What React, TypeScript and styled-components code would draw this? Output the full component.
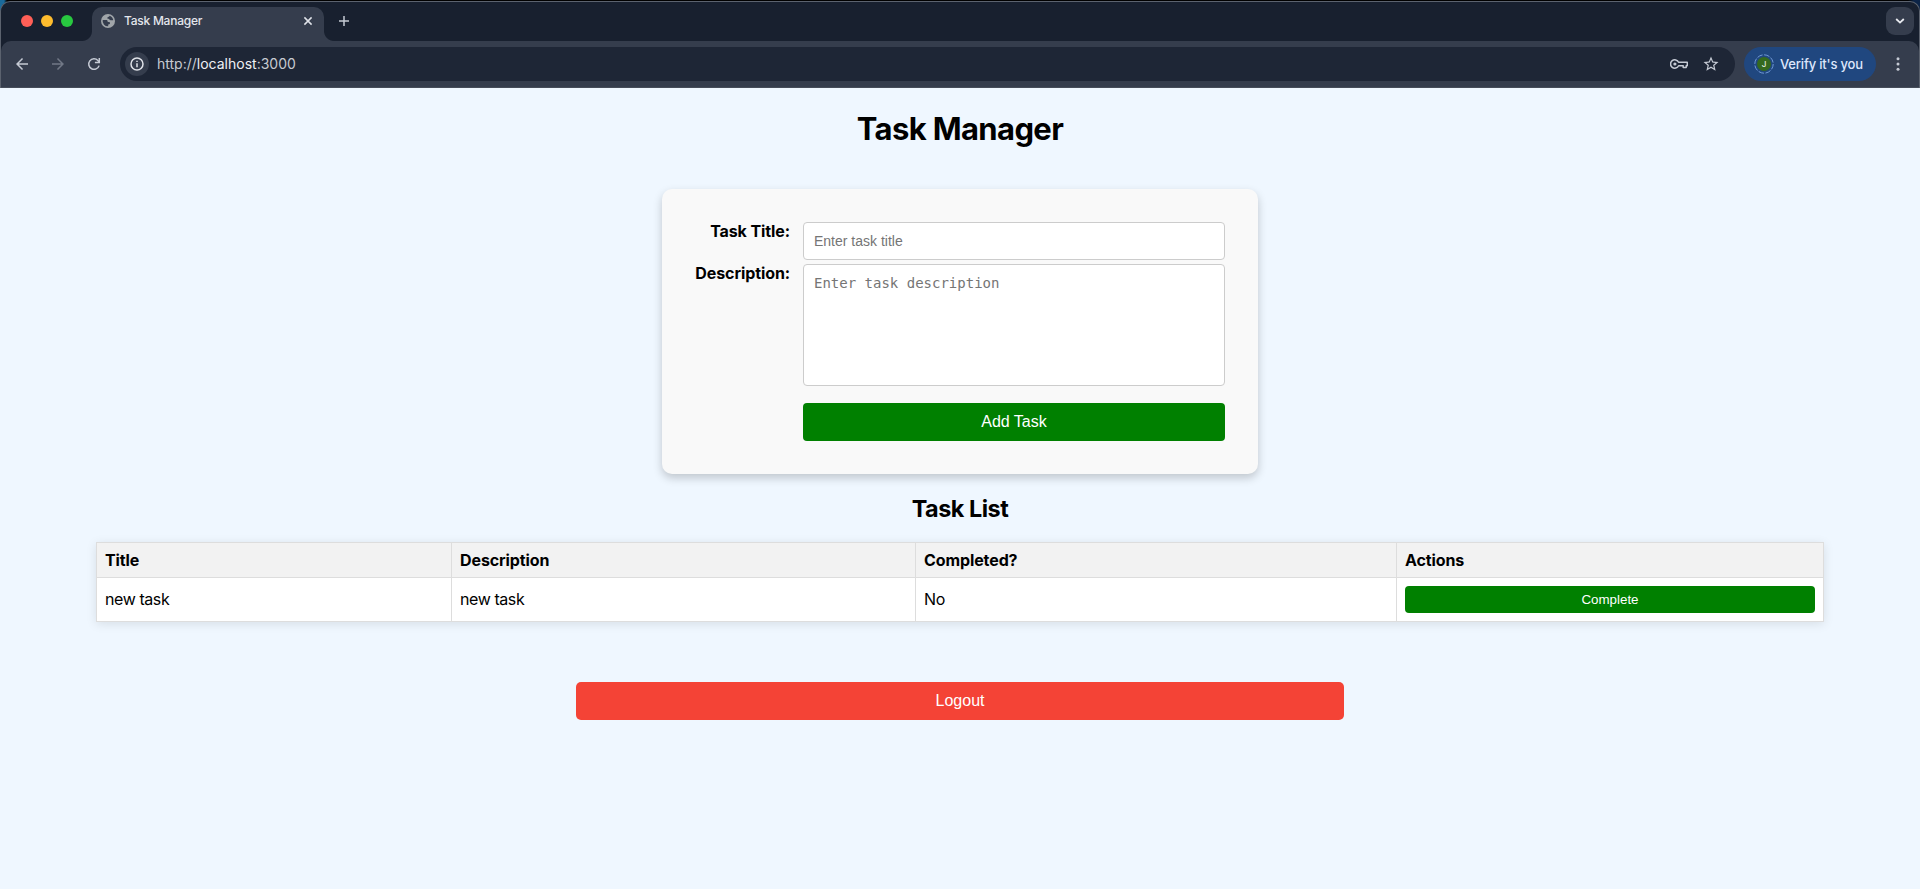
import React from "react";
import styled, { createGlobalStyle } from "styled-components";

const sans = `Inter, "Liberation Sans", sans-serif`;
const arial = `"Liberation Sans", Arial, sans-serif`;

const GlobalStyle = createGlobalStyle`
  *, *::before, *::after { box-sizing: border-box; }
  body { margin: 0; background: #eff7ff; font-family: ${sans}; color: #000; overflow: hidden; }
  svg { display: block; flex: none; }
`;

const Screen = styled.div`
  height: 889px;
  display: flex;
  flex-direction: column;
  background: #eff7ff;
`;

const Desktop = styled.div`
  background: linear-gradient(90deg, #1a6a9b 0 4px, #000 7px 1908px, #0c2447 1914px);
  padding-top: 1px;
`;

const Chrome = styled.header`
  height: 87px;
  border: 1px solid #5b626e;
  border-bottom: 0;
  border-radius: 10px 10px 0 0;
  overflow: hidden;
  background: #18202f;
`;

const TabStrip = styled.div`
  height: 39px;
  display: flex;
  align-items: center;
  padding: 0 5px 1px 20px;
`;

const Lights = styled.div`
  display: flex;
  gap: 8px;
  width: 71px;
`;

const Light = styled.span<{ $color: string }>`
  width: 12px;
  height: 12px;
  border-radius: 50%;
  background: ${(p) => p.$color};
`;

const Tab = styled.div`
  align-self: flex-end;
  position: relative;
  width: 232px;
  height: 34px;
  margin-bottom: -1px;
  padding: 0 10px 7px 9px;
  display: flex;
  align-items: center;
  border-radius: 10px 10px 0 0;
  background: #353d4d;

  &::before,
  &::after {
    content: "";
    position: absolute;
    bottom: 0;
    width: 10px;
    height: 10px;
  }
  &::before {
    left: -10px;
    background: radial-gradient(circle at 0 0, transparent 9.5px, #353d4d 10.5px);
  }
  &::after {
    right: -10px;
    background: radial-gradient(circle at 100% 0, transparent 9.5px, #353d4d 10.5px);
  }
`;

const TabTitle = styled.span`
  flex: 1;
  margin-left: 9px;
  font-size: 12px;
  font-weight: 500;
  letter-spacing: -0.25px;
  color: #e3e6ec;
`;

const NewTab = styled.div`
  margin-left: 15px;
`;

const TabSearch = styled.div`
  width: 28px;
  height: 28px;
  margin-left: auto;
  border-radius: 9px;
  background: #353d4d;
  display: grid;
  place-items: center;
`;

const Toolbar = styled.div`
  height: 47px;
  display: flex;
  align-items: center;
  background: #353d4d;
  border-radius: 10px 10px 0 0;
  border-bottom: 1px solid #464d5a;
  padding: 0 19px 1px 12px;
`;

const NavIcons = styled.div`
  display: flex;
  gap: 18px;
  margin-right: 17px;
`;

const Omnibox = styled.div`
  flex: 1;
  height: 34px;
  border-radius: 17px;
  background: #1e2636;
  display: flex;
  align-items: center;
  padding: 0 15px 0 5px;
`;

const SiteInfo = styled.div`
  width: 24px;
  height: 24px;
  border-radius: 50%;
  background: #353d4d;
  display: grid;
  place-items: center;
`;

const Url = styled.span`
  flex: 1;
  margin-left: 8px;
  font-size: 14px;
  color: #c7cad1;

  b {
    font-weight: 400;
    color: #eef0f4;
  }
`;

const OmniIcons = styled.div`
  display: flex;
  align-items: center;
  gap: 14px;
`;

const VerifyChip = styled.div`
  width: 132px;
  height: 34px;
  margin: 0 20px 0 9px;
  border-radius: 17px;
  background: #20477f;
  display: flex;
  align-items: center;
  padding-left: 10px;
  gap: 6px;
  font-size: 13px;
  font-weight: 500;
  letter-spacing: -0.18px;
  color: #dde6fb;
  white-space: nowrap;
`;

const AvatarWrap = styled.span`
  display: grid;
  place-items: center;

  > * {
    grid-area: 1 / 1;
  }
`;

const Avatar = styled.span`
  width: 14px;
  height: 14px;
  border-radius: 50%;
  background: #34691e;
  font-size: 8px;
  line-height: 14px;
  text-align: center;
  color: #e5eee0;
`;

const Page = styled.main`
  flex: 1;
  display: flex;
  flex-direction: column;
  align-items: center;
`;

const PageTitle = styled.h1`
  margin: 21px 0 0;
  font-size: 31px;
  line-height: 40px;
  font-weight: 700;
  letter-spacing: -0.63px;
`;

const TaskForm = styled.form`
  width: 596px;
  height: 285px;
  margin-top: 40px;
  padding: 33px;
  display: grid;
  grid-template-columns: 95px 422px;
  grid-template-rows: 38px 122px 38px;
  column-gap: 13px;
  row-gap: 4px;
  border-radius: 10px;
  background: #f9f9f9;
  box-shadow: 0 4px 10px rgba(0, 0, 0, 0.2);
`;

const Label = styled.label`
  text-align: right;
  white-space: nowrap;
  justify-self: end;
  font-size: 16px;
  line-height: 19px;
  font-weight: 700;
  letter-spacing: -0.1px;
`;

const TextInput = styled.input`
  width: 100%;
  height: 38px;
  padding: 10px;
  border: 1px solid #ccc;
  border-radius: 4px;
  background: #fff;
  font: 14px ${arial};
  &::placeholder { color: #757575; }
`;

const TextArea = styled.textarea`
  width: 100%;
  height: 122px;
  padding: 10px;
  border: 1px solid #ccc;
  border-radius: 4px;
  background: #fff;
  resize: none;
  font: 14px "DejaVu Sans Mono", monospace;
  &::placeholder { color: #757575; }
`;

const Button = styled.button<{ $tone: "go" | "stop"; $small?: boolean }>`
  display: block;
  width: 100%;
  height: ${(p) => (p.$small ? 27 : 38)}px;
  padding: 0;
  border: 0;
  border-radius: ${(p) => (p.$tone === "stop" ? 5 : 4)}px;
  background: ${(p) => (p.$tone === "stop" ? "#f44336" : "#008000")};
  color: #fff;
  font: ${(p) => (p.$small ? "13.333px" : "16px")} ${arial};
`;

const FormAction = styled.div`
  grid-column: 2;
  margin-top: 13px;
`;

const ListTitle = styled.h2`
  margin: 20px 0 0;
  font-size: 23.4px;
  line-height: 29px;
  font-weight: 700;
  letter-spacing: -0.48px;
`;

const Table = styled.table`
  width: 1728px;
  margin-top: 19px;
  table-layout: fixed;
  border-collapse: collapse;
  background: #fff;
  box-shadow: 0 2px 10px rgba(0, 0, 0, 0.1);
  font-size: 16px;
`;

const Col = styled.col<{ $w: number }>`
  width: ${(p) => p.$w}px;
`;

const Th = styled.th`
  height: 35px;
  padding: 0 8px;
  border: 1px solid #ddd;
  background: #f2f2f2;
  text-align: left;
  font-weight: 700;
  letter-spacing: -0.1px;
`;

const Td = styled.td`
  height: 44px;
  padding: 0 8px;
  border: 1px solid #ddd;
  letter-spacing: -0.42px;
`;

const CellText = styled.div`
  padding-bottom: 2px;
`;

const LogoutRow = styled.div`
  width: 768px;
  margin-top: 60px;
`;

const Icon = ({ d, size = 18, color = "#c5cad4" }: { d: string; size?: number; color?: string }) => (
  <svg width={size} height={size} viewBox="0 0 24 24" fill={color}>
    <path d={d} />
  </svg>
);

const BACK = "M20 11H7.83l5.59-5.59L12 4l-8 8 8 8 1.41-1.41L7.83 13H20v-2z";
const FORWARD = "M4 13h12.17l-5.59 5.59L12 20l8-8-8-8-1.41 1.41L16.17 11H4v2z";
const STAR =
  "M22 9.24l-7.19-.62L12 2 9.19 8.63 2 9.24l5.46 4.73L5.82 21 12 17.27 18.18 21l-1.63-7.03L22 9.24zM12 15.4l-3.76 2.27 1-4.28-3.32-2.88 4.38-.38L12 6.1l1.71 4.04 4.38.38-3.32 2.88 1 4.28L12 15.4z";

const ReloadIcon = () => (
  <svg width="18" height="18" viewBox="0 0 18 18" fill="none" stroke="#c5cad4" strokeWidth="1.5">
    <path d="M14.1 10.6A5.3 5.3 0 1 1 12.9 5.4L14.2 6.9" />
    <path d="M14.3 3v4.5H9.9" />
  </svg>
);

const Globe = () => (
  <svg width="14" height="14" viewBox="0 0 14 14">
    <circle cx="7" cy="7" r="7" fill="#a0a5a9" />
    <path
      d="M1.7 5.9h3.6c1 0 1.3.6 1.3 1.3 0 .6.5.9 1.1.9.9 0 1.3.4 1.3 1.1 0 .8-.6.9-1.2 1-.5.1-.6.4-.6 1v1.1A5.4 5.4 0 0 1 1.7 5.9zM8.6 1.8c-.2.9-.8 1-1.4 1.1-.6.1-.8.5-.8 1 0 .6.5.8 1 .8.6 0 .8.3 1 .8.2.6.7.8 1.3.8h2.5A5.4 5.4 0 0 0 8.6 1.8z"
      fill="#353d4d"
    />
  </svg>
);

const CloseIcon = () => (
  <svg width="12" height="12" viewBox="0 0 12 12" stroke="#dfe2e8" strokeWidth="1.5">
    <path d="M2.4 2.4l7.2 7.2M9.6 2.4L2.4 9.6" />
  </svg>
);

const PlusIcon = () => (
  <svg width="10" height="10" viewBox="0 0 10 10" stroke="#c5cad4" strokeWidth="1.5">
    <path d="M5 0v10M0 5h10" />
  </svg>
);

const InfoIcon = () => (
  <svg width="14" height="14" viewBox="0 0 14 14" fill="none" stroke="#dfe2e8" strokeWidth="1.5">
    <circle cx="7" cy="7" r="6" />
    <path d="M7 6.3v4M7 3.7v1.4" />
  </svg>
);

const KeyIcon = () => (
  <svg width="18" height="10" viewBox="0 0 18 10" fill="none" stroke="#c5cad4" strokeWidth="1.5">
    <path d="M8.6 3.3a4.2 4.2 0 1 0 0 3.4h4.6v1.9h3v-1.9h1.1V3.3z" strokeLinejoin="round" />
    <circle cx="4.9" cy="5" r="1.6" fill="#c5cad4" stroke="none" />
  </svg>
);

const ChevronIcon = () => (
  <svg width="10" height="6" viewBox="0 0 10 6" fill="none" stroke="#e8eaef" strokeWidth="1.8">
    <path d="M1.2 1L5 4.6 8.8 1" />
  </svg>
);

const DotsIcon = () => (
  <svg width="4" height="14" viewBox="0 0 4 14" fill="#c5cad4">
    <circle cx="2" cy="1.7" r="1.5" />
    <circle cx="2" cy="7" r="1.5" />
    <circle cx="2" cy="12.3" r="1.5" />
  </svg>
);

const AvatarRing = () => (
  <svg width="20" height="20" viewBox="0 0 20 20" fill="none" stroke="#6f98d6" strokeWidth="1">
    <circle cx="10" cy="10" r="9.2" strokeDasharray="5.6 1.6" />
  </svg>
);

const tasks = [{ title: "new task", description: "new task", completed: false }];

export default function App() {
  return (
    <Screen>
      <GlobalStyle />
      <Desktop>
        <Chrome>
          <TabStrip>
            <Lights>
              <Light $color="#ff5f57" />
              <Light $color="#febc2e" />
              <Light $color="#28c840" />
            </Lights>
            <Tab>
              <Globe />
              <TabTitle>Task Manager</TabTitle>
              <CloseIcon />
            </Tab>
            <NewTab>
              <PlusIcon />
            </NewTab>
            <TabSearch>
              <ChevronIcon />
            </TabSearch>
          </TabStrip>
          <Toolbar>
            <NavIcons>
              <Icon d={BACK} />
              <Icon d={FORWARD} color="#717886" />
              <ReloadIcon />
            </NavIcons>
            <Omnibox>
              <SiteInfo>
                <InfoIcon />
              </SiteInfo>
              <Url>
                http://<b>localhost</b>:3000
              </Url>
              <OmniIcons>
                <KeyIcon />
                <Icon d={STAR} />
              </OmniIcons>
            </Omnibox>
            <VerifyChip>
              <AvatarWrap>
                <AvatarRing />
                <Avatar>J</Avatar>
              </AvatarWrap>
              Verify it's you
            </VerifyChip>
            <DotsIcon />
          </Toolbar>
        </Chrome>
      </Desktop>
      <Page>
        <PageTitle>Task Manager</PageTitle>
        <TaskForm onSubmit={(e) => e.preventDefault()}>
          <Label htmlFor="title">Task Title:</Label>
          <TextInput id="title" placeholder="Enter task title" />
          <Label htmlFor="description">Description:</Label>
          <TextArea id="description" placeholder="Enter task description" />
          <FormAction>
            <Button $tone="go">Add Task</Button>
          </FormAction>
        </TaskForm>
        <ListTitle>Task List</ListTitle>
        <Table>
          <colgroup>
            <Col $w={355} />
            <Col $w={464} />
            <Col $w={481} />
            <Col $w={427} />
          </colgroup>
          <thead>
            <tr>
              <Th>Title</Th>
              <Th>Description</Th>
              <Th>Completed?</Th>
              <Th>Actions</Th>
            </tr>
          </thead>
          <tbody>
            {tasks.map((task) => (
              <tr key={task.title}>
                <Td>
                  <CellText>{task.title}</CellText>
                </Td>
                <Td>
                  <CellText>{task.description}</CellText>
                </Td>
                <Td>
                  <CellText>{task.completed ? "Yes" : "No"}</CellText>
                </Td>
                <Td>
                  <Button $tone="go" $small>
                    Complete
                  </Button>
                </Td>
              </tr>
            ))}
          </tbody>
        </Table>
        <LogoutRow>
          <Button $tone="stop">Logout</Button>
        </LogoutRow>
      </Page>
    </Screen>
  );
}
